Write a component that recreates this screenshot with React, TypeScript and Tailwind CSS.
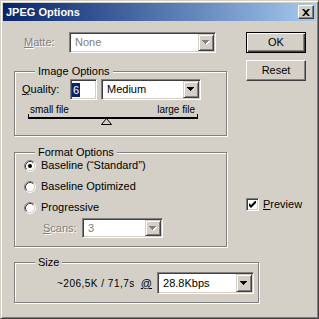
import clsx from 'clsx'

const sunken =
    'border border-t-[#808080] border-l-[#808080] border-r-white border-b-white shadow-[inset_1px_1px_0_#404040,inset_-1px_-1px_0_#d4d0c8]'
const etched = 'border border-[#808080] shadow-[inset_1px_1px_0_#fff,1px_1px_0_#fff]'
const disabledLabel = 'text-[#808080] [text-shadow:1px_1px_0_#fff]'

function Arrow({ disabled }: { disabled?: boolean }) {
    const d = 'M0 0h7v1H0z M1 1h5v1H1z M2 2h3v1H2z M3 3h1v1H3z'
    return (
        <svg width="8" height="5" viewBox="0 0 8 5">
            {disabled && <path d={d} transform="translate(1 1)" fill="#fff" />}
            <path d={d} fill={disabled ? '#808080' : '#000'} />
        </svg>
    )
}

function Combo({ className, text, disabled }: { className: string; text: string; disabled?: boolean }) {
    return (
        <div className={clsx('flex bg-white p-px', sunken, className)}>
            <div className={clsx('flex flex-1 items-center pl-[4px] text-[11px]', disabled ? 'text-[#808080]' : 'text-black')}>
                {text}
            </div>
            <div className="flex w-[16px] items-center justify-center border border-t-[#d4d0c8] border-l-[#d4d0c8] border-r-[#404040] border-b-[#404040] bg-[#d4d0c8] shadow-[inset_1px_1px_0_#fff,inset_-1px_-1px_0_#808080]">
                <Arrow disabled={disabled} />
            </div>
        </div>
    )
}

function Group({ label, className, children }: { label: string; className: string; children: React.ReactNode }) {
    return (
        <div className={clsx('relative', etched, className)}>
            <span className="absolute -top-[7px] left-[20px] bg-[#d4d0c8] px-[3px] text-[11px] leading-[13px]">{label}</span>
            {children}
        </div>
    )
}

function Radio({ checked }: { checked?: boolean }) {
    return (
        <svg width="12" height="12" viewBox="0 0 12 12">
            <circle cx="6" cy="6" r="4.5" fill="#fff" />
            <path d="M2.11 9.89 A5.5 5.5 0 0 1 9.89 2.11" stroke="#808080" fill="none" />
            <path d="M9.89 2.11 A5.5 5.5 0 0 1 2.11 9.89" stroke="#fff" fill="none" />
            <path d="M2.82 9.18 A4.5 4.5 0 0 1 9.18 2.82" stroke="#404040" fill="none" />
            <path d="M9.18 2.82 A4.5 4.5 0 0 1 2.82 9.18" stroke="#d4d0c8" fill="none" />
            {checked && <circle cx="6" cy="6" r="2" fill="#000" />}
        </svg>
    )
}

const radios = [
    { label: 'Baseline (“Standard”)', checked: true },
    { label: 'Baseline Optimized' },
    { label: 'Progressive' },
]

export default function App() {
    return (
        <div className="flex h-[319px] w-[319px] flex-col border border-t-[#d4d0c8] border-l-[#d4d0c8] border-r-[#404040] border-b-[#404040] bg-[#d4d0c8] p-[2px] font-['Liberation_Sans',Arial,sans-serif] text-[11px] text-black shadow-[inset_1px_1px_0_#fff,inset_-1px_-1px_0_#808080]">
            {/* title bar */}
            <div className="flex h-[18px] shrink-0 items-center justify-between bg-linear-to-r from-[#0a246a] to-[#a6caf0] pl-[3px] pr-[2px]">
                <span className="text-[11px] font-bold text-white">JPEG Options</span>
                <div className="flex h-[14px] w-[16px] items-center justify-center border border-t-white border-l-white border-r-[#404040] border-b-[#404040] bg-[#d4d0c8] shadow-[inset_-1px_-1px_0_#808080]">
                    <svg width="8" height="7" viewBox="0 0 8 7">
                        <path d="M0 0h2l2 2 2-2h2L5 3.5 8 7H6L4 5 2 7H0l3-3.5z" fill="#000" />
                    </svg>
                </div>
            </div>

            <div className="flex flex-col pl-[11px]">
                <div className="flex">
                    <div className="flex w-[213px] flex-col">
                        <div className="mt-[11px] flex h-[21px] items-center">
                            <span className={clsx('w-[55px] pl-[10px]', disabledLabel)}>
                                <span className="underline">M</span>atte:
                            </span>
                            <Combo className="h-[21px] w-[147px]" text="None" disabled />
                        </div>

                        <Group label="Image Options" className="mt-[18px] h-[65px] w-[213px]">
                            <div className="mt-[7px] flex h-[21px] items-center pl-[7px]">
                                <span className="w-[48px]">
                                    <span className="underline">Q</span>uality:
                                </span>
                                <div className={clsx('flex h-[21px] w-[27px] items-center bg-white p-px', sunken)}>
                                    <span className="bg-[#0a246a] px-[1px] leading-[14px] text-white">6</span>
                                </div>
                                <Combo className="ml-[4px] h-[21px] w-[100px]" text="Medium" />
                            </div>
                            <div className="mt-[5px] flex h-[10px] w-[180px] justify-between pl-[15px] text-[10px] leading-[10px]">
                                <span>small file</span>
                                <span>large file</span>
                            </div>
                            <svg className="-mt-[2px] ml-[12px]" width="172" height="13" viewBox="0 0 172 13">
                                <rect x="1" y="4" width="170" height="2" fill="#000" />
                                <rect x="1" y="1" width="1" height="4" fill="#000" />
                                <rect x="170" y="1" width="1" height="4" fill="#000" />
                                <polygon points="79.5,5.5 74.5,11.5 84.5,11.5" fill="#d4d0c8" stroke="#000" />
                            </svg>
                        </Group>

                        <Group label="Format Options" className="mt-[16px] h-[95px] w-[213px]">
                            <div className="mt-[2px] flex flex-col pl-[9px]">
                                {radios.map((r) => (
                                    <div key={r.label} className="flex h-[21px] items-center">
                                        <Radio checked={r.checked} />
                                        <span className="ml-[5px]">{r.label}</span>
                                    </div>
                                ))}
                                <div className="flex h-[20px] items-center pl-[19px]">
                                    <span className={clsx('w-[39px]', disabledLabel)}>
                                        <span className="underline">S</span>cans:
                                    </span>
                                    <Combo className="h-[20px] w-[81px]" text="3" disabled />
                                </div>
                            </div>
                        </Group>
                    </div>

                    <div className="ml-[19px] flex flex-col">
                        <div className="mt-[11px] flex h-[21px] w-[60px] items-center justify-center border border-black bg-[#d4d0c8] font-normal shadow-[inset_1px_1px_0_#fff,inset_-1px_-1px_0_#404040,inset_-2px_-2px_0_#808080]">
                            OK
                        </div>
                        <div className="mt-[7px] flex h-[21px] w-[60px] items-center justify-center border border-t-white border-l-white border-r-[#404040] border-b-[#404040] bg-[#d4d0c8] font-normal shadow-[inset_-1px_-1px_0_#808080]">
                            Reset
                        </div>
                        <div className="mt-[117px] flex h-[13px] items-center">
                            <div className={clsx('flex h-[13px] w-[13px] items-center justify-center bg-white', sunken)}>
                                <svg width="7" height="7" viewBox="0 0 7 7">
                                    <path d="M0 2v3l2 2 5-5V-1L2 4z" fill="#000" />
                                </svg>
                            </div>
                            <span className="ml-[4px]">
                                <span className="underline">P</span>review
                            </span>
                        </div>
                    </div>
                </div>

                <Group label="Size" className="mt-[15px] h-[41px] w-[245px]">
                    <div className="mt-[9px] flex h-[22px] items-center pl-[42px]">
                        <span className="text-[10px] tracking-[0.5px]">~206,5K / 71,7s</span>
                        <span className="ml-[6px] underline">@</span>
                        <Combo className="ml-[5px] h-[22px] w-[97px]" text="28.8Kbps" />
                    </div>
                </Group>
            </div>
        </div>
    )
}
